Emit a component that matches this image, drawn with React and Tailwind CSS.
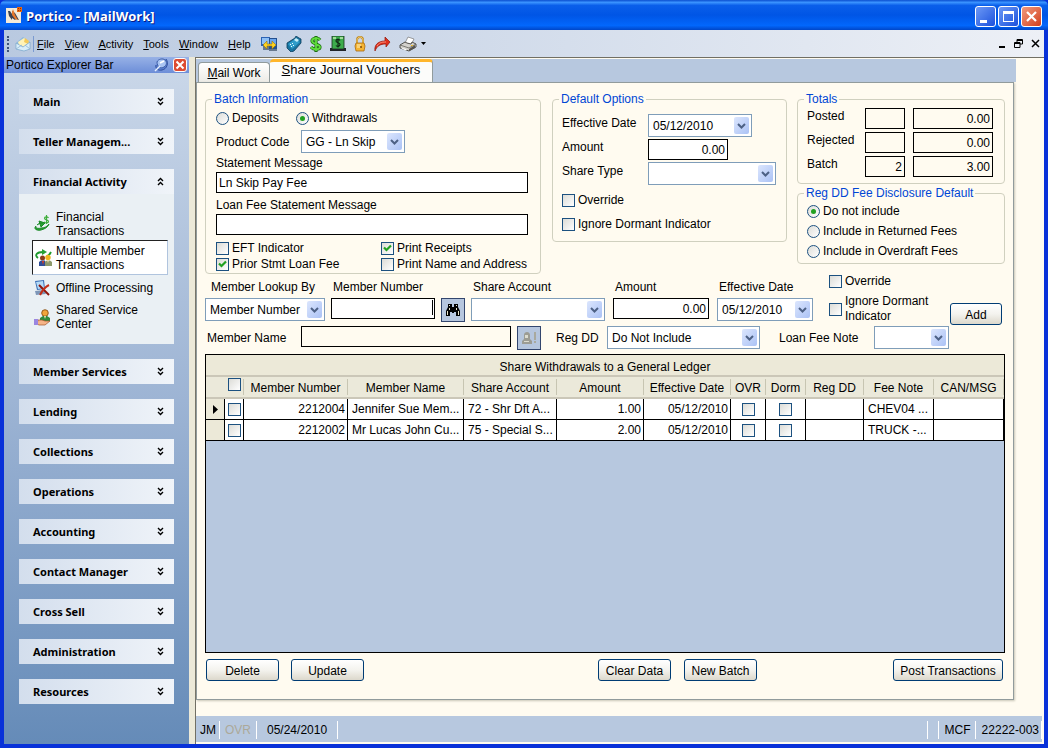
import React, { useState } from 'react';
import clsx from 'clsx';

const MENUS = ['File', 'View', 'Activity', 'Tools', 'Window', 'Help'];

const SECTIONS_TOP = ['Main', 'Teller Managem...'];
const SECTIONS_BOTTOM = [
  'Member Services',
  'Lending',
  'Collections',
  'Operations',
  'Accounting',
  'Contact Manager',
  'Cross Sell',
  'Administration',
  'Resources',
];

const ROWS = [
  { number: '2212004', name: 'Jennifer Sue Mem...', share: '72 - Shr Dft A...', amount: '1.00', date: '05/12/2010', note: 'CHEV04 ...' },
  { number: '2212002', name: 'Mr Lucas John Cu...', share: '75 - Special S...', amount: '2.00', date: '05/12/2010', note: 'TRUCK -...' },
];

/* ---------- icons ---------- */

const AppIcon = () => (
  <svg viewBox="0 0 16 16" className="w-4 h-4 shrink-0">
    <rect y="1" width="15" height="15" fill="#f4ead8" />
    <path d="M2 4h2l2 3V4l3 2 4 7-3-1-1 1-3-2v2L3 9z" fill="#3b4252" />
    <path d="M6 5l1-3 2 6 3 5-3-1-3-4z" fill="#e8782a" />
    <rect x="11" width="5" height="5" fill="#e86a10" />
    <path d="M12 1h1v1h-1zM14 1h1v1h-1zM12 3h1v1h-1zM14 3h1v1h-1z" fill="#a02c00" />
  </svg>
);

const EnvelopeIcon = () => (
  <svg viewBox="0 0 16 16" className="w-4 h-4">
    <path d="M1 7l7-6 7 5v7l-6 2-8-2z" fill="#8db9dc" />
    <path d="M3 6l6-4 5 4-5 5-5-2z" fill="#fff3b8" />
    <path d="M10 2l4 3-1 3-4-2z" fill="#f3c95a" />
    <path d="M1 7l7 4 7-5v7l-6 2-8-2z" fill="#d9eefa" stroke="#6f9dc4" strokeWidth=".6" />
    <path d="M1 13l6-4M15 13l-5-4" stroke="#8fb4d2" strokeWidth=".8" />
  </svg>
);

const ComputersIcon = () => (
  <svg viewBox="0 0 17 16" className="w-[17px] h-4">
    <path d="M0 1h9v9H0z" fill="#2c63b4" />
    <path d="M1 2h7v6H1z" fill="#8fc0f5" />
    <path d="M8 2h8v11H8z" fill="#24508f" />
    <path d="M9 3h6v7H9z" fill="#6aa5ec" />
    <path d="M2 10h6v4H2zM8 13h8v2H8z" fill="#66788f" />
    <path d="M2 9l4-4v3h5V5l4 4-4 4v-3H6v3z" fill="#ffd21f" stroke="#98730a" strokeWidth=".6" />
  </svg>
);

const PhoneIcon = () => (
  <svg viewBox="0 0 16 16" className="w-4 h-4">
    <path d="M1 7l8-5 1-2 3 2 2 1v4l-7 8-3 1-4-4z" fill="#17739f" stroke="#0d3c5c" strokeWidth=".8" />
    <path d="M2 8l7-5 5 3-8 7z" fill="#2f9cc9" />
    <path d="M8 4l2-2 3 2-2 2z" fill="#c5eefa" />
    <path d="M4 8l1 1M6 7l1 1M5 10l1 1M7 9l1 1" stroke="#eafaff" />
  </svg>
);

const DollarIcon = () => (
  <svg viewBox="0 0 12 16" className="w-3 h-4">
    <path d="M10 4C8 1 2 2 2 5s8 3 8 6-7 3-9 0M6 0v16" fill="none" stroke="#1d6d10" strokeWidth="3.200" />
    <path d="M10 4C8 1 2 2 2 5s8 3 8 6-7 3-9 0M6 1v14" fill="none" stroke="#5fdc3c" strokeWidth="1.800" />
  </svg>
);

const CashDrawerIcon = () => (
  <svg viewBox="0 0 16 16" className="w-4 h-4">
    <path d="M2 0h12v13H2z" fill="#3dac4c" stroke="#17301c" strokeWidth=".8" />
    <path d="M3 1h3v2H3zM10 1h3v2h-3z" fill="#a0dd98" />
    <path d="M10 4.500C9 3 6 3 6 5s4 1.500 4 3.500S7 11 6 9.500M8 2.500v9" fill="none" stroke="#0f2914" strokeWidth="1.200" />
    <path d="M0 12h2v1h12v-1h2v3H0z" fill="#20242a" />
  </svg>
);

const LockIcon = () => (
  <svg viewBox="0 0 12 16" className="w-3 h-4">
    <path d="M3 8V4c0-4 6-4 6 0v4" fill="none" stroke="#b98018" strokeWidth="2" />
    <path d="M3 8V4c0-4 6-4 6 0v4" fill="none" stroke="#ffe28a" strokeWidth=".8" />
    <path d="M2 7h8l1 3-1 5H2l-1-5z" fill="#f5b432" stroke="#a86a10" strokeWidth=".8" />
    <path d="M3 9h4M3 11h4" stroke="#fff0b8" />
    <circle cx="7" cy="11" r="1" fill="#7c4a08" />
  </svg>
);

const RedoIcon = () => (
  <svg viewBox="0 0 17 16" className="w-[17px] h-4">
    <path d="M1 15c-1-6 3-10 10-10V1l5 5-4 5V8c-6 0-9 2-11 7z" fill="#e0301c" stroke="#8e1409" strokeWidth=".7" />
    <path d="M3 10c2-3 4-4 9-4" fill="none" stroke="#ff8f78" />
  </svg>
);

const PrinterIcon = () => (
  <svg viewBox="0 0 18 16" className="w-[18px] h-4">
    <path d="M6 7l3-6 6 2-3 6z" fill="#fff" stroke="#777" strokeWidth=".7" />
    <path d="M1 9l5-3 2 1 4 1 1-2 4 2v3l-7 4-9-3z" fill="#d3d1cc" stroke="#44433f" strokeWidth=".9" />
    <path d="M1 9l9 3 7-4" fill="none" stroke="#66645e" strokeWidth=".8" />
    <path d="M4 12l4 1.500-1 1-5-2z" fill="#fff" />
    <path d="M10 13l6-4v3l-6 3z" fill="#56544f" />
    <path d="M12 9h2v1h-2z" fill="#e6b82a" />
  </svg>
);

const MoneyFlowIcon = () => (
  <svg viewBox="0 0 16 18" className="w-4 h-[18px] shrink-0">
    <path d="M14.500 3c-1-1.500-4-1.500-4 .3s4 1.400 4 3.200-3.500 2-4.500.3M12.500 0v9" fill="none" stroke="#3fae3c" strokeWidth="1.200" />
    <path d="M2 11c-3 3 1 5 5 4s7-3 8-6c-2 3-5 4-8 4-3 1-6 0-5-2z" fill="#27a034" stroke="#1c8a28" />
    <path d="M3 10c2-2 4-2 6-2M5 6l6 2-4 4-1-3z" fill="#27a034" stroke="#1c8a28" />
  </svg>
);

const MembersFlowIcon = () => (
  <svg viewBox="0 0 17 18" className="w-[17px] h-[18px] shrink-0">
    <path d="M3 9c-4-3-1-6 5-6M11 8c3-1 4-3 5-5" fill="none" stroke="#1f9a2e" strokeWidth="1.800" />
    <path d="M7 0l5 3-5 3z" fill="#27a034" />
    <circle cx="7.500" cy="9" r="2.500" fill="#8a3d1a" />
    <circle cx="13" cy="8.500" r="2.700" fill="#f0b51e" />
    <path d="M4 17v-4l2-1.500h4V17z" fill="#2e4d98" />
    <path d="M7 12l1 4 1-4z" fill="#e43c1c" />
    <path d="M10 17v-4.500l2-1h3l2 1.500V17z" fill="#8e9a6c" />
    <path d="M12 11h2l-1 3z" fill="#f7dfa8" />
  </svg>
);

const OfflineIcon = () => (
  <svg viewBox="0 0 16 16" className="w-4 h-4 shrink-0">
    <path d="M1 1l9-1 1 9-8 1z" fill="#3b6fb5" />
    <path d="M2 2l7-1 1 7-6 1z" fill="#b5dbf8" />
    <path d="M1 11l9-1 2 4-10 1z" fill="#7d96b8" />
    <path d="M5 5l10 10" stroke="#8e1409" strokeWidth="2" />
    <path d="M15 5c-4 2-7 6-9 10" fill="none" stroke="#c2301a" strokeWidth="2" />
  </svg>
);

const SharedIcon = () => (
  <svg viewBox="0 0 16 17" className="w-4 h-[17px] shrink-0">
    <circle cx="11" cy="4" r="3.300" fill="#f0a53a" stroke="#7d4208" strokeWidth=".8" />
    <path d="M6 12V9l3-2h4l3 2v3z" fill="#2f8a3c" />
    <path d="M10 7h2l-1 3z" fill="#f8e3b8" />
    <path d="M4 11h4l3 1h5l-5 4H5l-2-1z" fill="#f5b488" stroke="#a2542a" strokeWidth=".7" />
    <path d="M0 10h4v6H0z" fill="#9a86e0" />
  </svg>
);

const BinocularsIcon = () => (
  <svg viewBox="0 0 16 14" className="w-4 h-3.5">
    <path d="M3 1h4v3h2V1h4v3l2 4v5h-4V9H9v1H7V9H5v4H1V8l2-4z" fill="#000" />
    <path d="M4.500 2v1M11.500 2v1M4.500 5v2M11.500 5v2M2.500 8v4M13.500 8v4" stroke="#e8e2c8" />
  </svg>
);

const PersonAlertIcon = () => (
  <svg viewBox="0 0 16 14" className="w-4 h-3.5">
    <path d="M3 4c0-4 6-4 6 0v4l2 2v3H1v-3l2-2z" fill="#9c9c94" />
    <path d="M4 4h3v3H4zM3 10h5v1H3z" fill="#dcdcd0" />
    <path d="M13 1h2v8h-2zM13 10h2v2h-2z" fill="#a9a99e" />
  </svg>
);

const Chevrons = ({ up }) => (
  <svg viewBox="0 0 7 9" className="w-[7px] h-[9px]" fill="none" stroke="#000" strokeWidth="1.400">
    {up ? <path d="M1 4l2.500-2.500L6 4M1 8l2.500-2.500L6 8" /> : <path d="M1 1l2.500 2.500L6 1M1 5l2.500 2.500L6 5" />}
  </svg>
);

/* ---------- form controls ---------- */

const Check = ({ label, checked = false, className, ...rest }) => {
  const [on, setOn] = useState(checked);
  return (
    <label className={clsx('flex items-center gap-[3px]', className)}>
      <span className="grid place-items-center shrink-0">
        <input
          type="checkbox"
          checked={on}
          onChange={(e) => setOn(e.target.checked)}
          className="[grid-area:1/1] appearance-none w-[13px] h-[13px] border border-[#1c5180] bg-gradient-to-br from-[#dcdcd7] to-white"
          {...rest}
        />
        {on && (
          <svg viewBox="0 0 9 9" className="[grid-area:1/1] w-[9px] h-[9px] pointer-events-none">
            <path d="M1 3.500L3.500 6 8 1.500" fill="none" stroke="#21a121" strokeWidth="2.200" />
          </svg>
        )}
      </span>
      {label && <span>{label}</span>}
    </label>
  );
};

const Radio = ({ label, className, ...rest }) => (
  <label className={clsx('flex items-center gap-[3px]', className)}>
    <span className="grid place-items-center">
      <input
        type="radio"
        className="peer [grid-area:1/1] appearance-none w-[13px] h-[13px] rounded-full border border-[#1c5180] bg-gradient-to-br from-[#dcdcd7] to-white"
        {...rest}
      />
      <span className="[grid-area:1/1] hidden peer-checked:block w-[5px] h-[5px] rounded-full bg-[#21a121] pointer-events-none" />
    </span>
    <span>{label}</span>
  </label>
);

const Select = ({ value, className, ...rest }) => (
  <span className={clsx('grid items-center h-[23px] shrink-0', className)}>
    <select className="[grid-area:1/1] appearance-none w-full h-full pl-1 bg-white border border-[#7f9db9] rounded-none" {...rest}>
      <option>{value}</option>
    </select>
    <span className="[grid-area:1/1] justify-self-end mr-[3px] w-[15px] h-[17px] flex items-center justify-center rounded-xs bg-gradient-to-br from-[#dce6fd] to-[#abc2f5] pointer-events-none">
      <svg viewBox="0 0 9 6" className="w-[9px] h-1.5">
        <path d="M1 1l3.500 3.500L8 1" fill="none" stroke="#4d6185" strokeWidth="2" />
      </svg>
    </span>
  </span>
);

const Field = ({ className, ...rest }) => (
  <input type="text" className={clsx('h-[21px] px-0.5 border border-black shrink-0', className)} {...rest} />
);

const Button = ({ className, children }) => (
  <button
    type="button"
    className={clsx(
      'h-[22px] pt-0.5 rounded-[3px] border border-[#003c74] bg-gradient-to-b from-white via-[#f4f3ee] to-[#dcd8cc] text-center',
      className
    )}
  >
    {children}
  </button>
);

const Group = ({ title, className, children }) => (
  <fieldset className={clsx('border border-[#d0d0bf] rounded', className)}>
    <legend className="ml-1.5 px-0.5 h-3.5 text-[#0046d5]">{title}</legend>
    <div className="pl-[9px]">{children}</div>
  </fieldset>
);

/* ---------- chrome ---------- */

const TitleBar = () => (
  <header className="h-[30px] shrink-0 flex items-center pl-1.5 pr-1.5 gap-1 rounded-t-md bg-[linear-gradient(#0b4fd0,#3a93ff_8%,#0a5fea_18%,#0055e5_50%,#0267fc_85%,#0046c8)]">
    <AppIcon />
    <h1 className="flex-1 pt-0.5 font-['Open_Sans'] font-bold text-[13px] text-white [text-shadow:1px_1px_#0a1883]">Portico - [MailWork]</h1>
    <div className="flex gap-0.5 pt-0.5">
      <button type="button" aria-label="Minimize" className="w-[21px] h-[21px] rounded-[3px] border border-white bg-gradient-to-br from-[#6d98f5] to-[#1c4fdc]">
        <svg viewBox="0 0 19 19"><path d="M4 13h7v3H4z" fill="#fff" /></svg>
      </button>
      <button type="button" aria-label="Maximize" className="w-[21px] h-[21px] rounded-[3px] border border-white bg-gradient-to-br from-[#6d98f5] to-[#1c4fdc]">
        <svg viewBox="0 0 19 19"><path d="M4 4h11v11H4zM5 7h9v7H5z" fill="#fff" fillRule="evenodd" /></svg>
      </button>
      <button type="button" aria-label="Close" className="w-[21px] h-[21px] rounded-[3px] border border-white bg-gradient-to-br from-[#f0987c] to-[#d23c14]">
        <svg viewBox="0 0 19 19"><path d="M5 5l9 9M14 5l-9 9" stroke="#fff" strokeWidth="2.200" /></svg>
      </button>
    </div>
  </header>
);

const MenuBar = () => (
  <div className="h-[27px] shrink-0 flex items-center pl-0.5 pr-1 bg-gradient-to-r from-[#b9c9e0] to-[#edf0f6] text-[11px]">
    <span className="w-0.5 h-4 ml-px mr-1.5 border-l-2 border-dotted border-[#3d5178]" />
    <EnvelopeIcon />
    <span className="w-px h-4 ml-0.5 mr-[3px] bg-[#7a9ad0]" />
    <nav className="flex gap-2.5">
      {MENUS.map((m) => (
        <a key={m} href="#">
          <u>{m[0]}</u>
          {m.slice(1)}
        </a>
      ))}
    </nav>
    <div className="flex items-center gap-2 ml-2.5">
      <ComputersIcon />
      <PhoneIcon />
      <DollarIcon />
      <CashDrawerIcon />
      <LockIcon />
      <RedoIcon />
      <PrinterIcon />
    </div>
    <svg viewBox="0 0 5 3" className="w-[5px] h-[3px] ml-1"><path d="M0 0h5L2.500 3z" /></svg>
    <div className="ml-auto flex items-center gap-2">
      <button type="button" aria-label="Minimize document">
        <svg viewBox="0 0 8 9" className="w-2 h-[9px]"><path d="M1 7h6v2H1z" /></svg>
      </button>
      <button type="button" aria-label="Restore document">
        <svg viewBox="0 0 9 9" className="w-[9px] h-[9px]" fill="none" stroke="#000"><path d="M3 3V.5h5.500V5H6M3 1.500h5.500M.5 3.500H6v5H.5zM.5 4.500H6" /></svg>
      </button>
      <button type="button" aria-label="Close document">
        <svg viewBox="0 0 9 9" className="w-[9px] h-[9px]"><path d="M1 1l7 7M8 1L1 8" stroke="#000" strokeWidth="1.500" /></svg>
      </button>
    </div>
  </div>
);

const SectionBar = ({ title, open }) => (
  <button
    type="button"
    className="w-full h-[25px] pl-3.5 pr-2.5 flex items-center justify-between bg-gradient-to-r from-[#d3deed] to-[#f0f4f9] font-['Noto_Sans'] font-bold text-[11px]"
  >
    {title}
    <Chevrons up={open} />
  </button>
);

const Sidebar = () => (
  <aside className="w-[185px] shrink-0 flex flex-col bg-gradient-to-b from-[#cbd8e9] via-[#9db4d4] to-[#658bb8]">
    <div className="h-4 pl-0.5 pr-0.5 flex items-center gap-1 bg-gradient-to-b from-[#97b1e6] to-[#6d8ed8]">
      <h2 className="flex-1">Portico Explorer Bar</h2>
      <svg viewBox="0 0 15 14" className="w-[15px] h-3.5">
        <path d="M12 1c3 4 1 10-4 11-4 1-7-2-6-5" fill="#5b7fd0" stroke="#2f4f9c" />
        <path d="M3 4c1-3 6-4 8-2s2 5-1 7-7 0-7-5z" fill="#a9c4f2" stroke="#3c5da8" />
        <path d="M1 13l5-5" stroke="#e8f0ff" strokeWidth="1.500" />
        <path d="M6 5l4-2" stroke="#fff" strokeWidth="1.800" />
      </svg>
      <button type="button" aria-label="Close bar" className="w-3.5 h-3.5 rounded-[3px] border border-white bg-[#dd4b32]">
        <svg viewBox="0 0 12 12"><path d="M2.500 2.500l7 7M9.500 2.500l-7 7" stroke="#fff" strokeWidth="2" /></svg>
      </button>
    </div>
    <div className="pt-4 px-[15px] pb-[15px] flex flex-col gap-[15px]">
      {SECTIONS_TOP.map((s) => (
        <SectionBar key={s} title={s} />
      ))}
      <div>
        <SectionBar title="Financial Activity" open />
        <ul className="h-[150px] pt-3.5 pr-1.5 pl-[13px] bg-[#eaf0f4] leading-3.5">
          <li className="flex items-center gap-1.5 h-8 pl-0.5">
            <MoneyFlowIcon />
            <a href="#">Financial<br />Transactions</a>
          </li>
          <li className="flex items-center gap-1 h-[35px] pl-0.5 bg-white border border-t-[#222] border-l-[#222] border-r-[#b0c4de] border-b-[#b0c4de]">
            <MembersFlowIcon />
            <a href="#">Multiple Member<br />Transactions</a>
          </li>
          <li className="flex items-center gap-1.5 h-[26px] pl-0.5 whitespace-nowrap">
            <OfflineIcon />
            <a href="#">Offline Processing</a>
          </li>
          <li className="flex items-center gap-1.5 h-8 pl-0.5">
            <SharedIcon />
            <a href="#">Shared Service<br />Center</a>
          </li>
        </ul>
      </div>
      {SECTIONS_BOTTOM.map((s) => (
        <SectionBar key={s} title={s} />
      ))}
    </div>
  </aside>
);

/* ---------- voucher form ---------- */

const BatchInformation = () => (
  <Group title="Batch Information" className="w-[336px] h-[182px]">
    <div className="flex pl-px mt-1 h-4">
      <Radio name="batch" label="Deposits" className="w-20" />
      <Radio name="batch" label="Withdrawals" defaultChecked />
    </div>
    <div className="pl-px">
      <div className="flex items-center mt-1">
        <label htmlFor="product" className="w-[85px]">Product Code</label>
        <Select id="product" value="GG - Ln Skip" className="w-[104px]" />
      </div>
      <label htmlFor="stmt" className="block h-[19px] leading-5">Statement Message</label>
      <Field id="stmt" defaultValue="Ln Skip Pay Fee" className="block w-[312px] bg-white" />
      <label htmlFor="loanmsg" className="block h-[21px] leading-6">Loan Fee Statement Message</label>
      <Field id="loanmsg" className="block w-[312px] bg-white" />
      <div className="grid grid-cols-[165px_auto] auto-rows-[16px] items-center mt-[5px]">
        <Check label="EFT Indicator" />
        <Check label="Print Receipts" checked />
        <Check label="Prior Stmt Loan Fee" checked />
        <Check label="Print Name and Address" />
      </div>
    </div>
  </Group>
);

const DefaultOptions = () => (
  <Group title="Default Options" className="w-[235px] h-[150px]">
    <div className="grid grid-cols-[86px_auto] auto-rows-[24px] mt-2 leading-[18px]">
      <label htmlFor="defdate">Effective Date</label>
      <Select id="defdate" value="05/12/2010" className="w-[104px]" />
      <label htmlFor="defamt">Amount</label>
      <Field id="defamt" defaultValue="0.00" className="w-20 mt-px bg-white text-right" />
      <label htmlFor="sharetype">Share Type</label>
      <Select id="sharetype" value="" className="w-[128px]" />
    </div>
    <Check label="Override" className="h-6 mt-0.5" />
    <Check label="Ignore Dormant Indicator" className="h-6" />
  </Group>
);

const Totals = () => (
  <Group title="Totals" className="h-[92px]">
    <div className="grid grid-cols-[58px_48px_80px] auto-rows-[24px] mt-0.5 leading-4">
      {[['Posted', '', '0.00'], ['Rejected', '', '0.00'], ['Batch', '2', '3.00']].map(([name, count, total]) => (
        <React.Fragment key={name}>
          <span>{name}</span>
          <Field readOnly aria-label={`${name} count`} value={count} className="w-10 text-right" />
          <Field readOnly aria-label={`${name} total`} value={total} className="w-20 text-right" />
        </React.Fragment>
      ))}
    </div>
  </Group>
);

const RegDDDefault = () => (
  <Group title="Reg DD Fee Disclosure Default" className="h-[78px] mt-0.5">
    <div className="pt-px">
      <Radio name="regdd" label="Do not include" className="h-5" defaultChecked />
      <Radio name="regdd" label="Include in Returned Fees" className="h-5" />
      <Radio name="regdd" label="Include in Overdraft Fees" className="h-5" />
    </div>
  </Group>
);

const IconButton = ({ label, children }) => (
  <button type="button" aria-label={label} className="w-6 h-6 shrink-0 flex items-center justify-center bg-[#b6c6de] border border-[#33466e]">
    {children}
  </button>
);

const Lookup = () => (
  <div className="flex items-start h-12">
    <div className="flex items-start">
      <div>
        <label htmlFor="lookup" className="block h-6 pl-1.5 leading-[26px]">Member Lookup By</label>
        <Select id="lookup" value="Member Number" className="w-[120px]" />
      </div>
      <div className="ml-1.5">
        <label htmlFor="memnum" className="block h-6 pl-0.5 leading-[26px]">Member Number</label>
        <div className="relative">
          <Field id="memnum" className="block w-[104px] bg-white text-right" />
          <span className="absolute right-0.5 top-0.5 w-px h-[15px] bg-black" />
        </div>
      </div>
      <div className="ml-1.5 pt-6">
        <IconButton label="Find member"><BinocularsIcon /></IconButton>
      </div>
      <div className="ml-1.5">
        <label htmlFor="shareacct" className="block h-6 pl-0.5 leading-[26px]">Share Account</label>
        <Select id="shareacct" value="" className="w-[134px]" />
      </div>
      <div className="ml-2">
        <label htmlFor="amt" className="block h-6 pl-0.5 leading-[26px]">Amount</label>
        <Field id="amt" defaultValue="0.00" className="block w-24 bg-white text-right" />
      </div>
      <div className="ml-2">
        <label htmlFor="effdate" className="block h-6 pl-0.5 leading-[26px]">Effective Date</label>
        <Select id="effdate" value="05/12/2010" className="w-24" />
      </div>
    </div>
    <div className="ml-4 leading-[15px]">
      <Check label="Override" className="h-3.5" />
      <Check label={<>Ignore Dormant<br />Indicator</>} className="mt-1.5" />
    </div>
    <Button className="w-[52px] ml-auto mr-[3px] mt-[29px]">Add</Button>
  </div>
);

const LookupSecond = () => (
  <div className="flex items-center mt-1 h-[23px]">
    <label htmlFor="memname" className="w-24 pl-0.5">Member Name</label>
    <Field id="memname" className="w-[210px] mb-0.5" />
    <span className="ml-1.5"><IconButton label="Member alert"><PersonAlertIcon /></IconButton></span>
    <label htmlFor="regddsel" className="ml-[15px] w-[51px]">Reg DD</label>
    <Select id="regddsel" value="Do Not Include" className="w-[153px]" />
    <label htmlFor="feenote" className="ml-[19px] w-[95px]">Loan Fee Note</label>
    <Select id="feenote" value="" className="w-[75px]" />
  </div>
);

const Th = ({ children, className }) => (
  <th className={clsx('h-[22px] p-0 font-normal border-b-2 border-b-[#cbc7b8]', className)}>
    <span className="flex items-end justify-center h-4 border-r border-[#c7c5b2]">{children}</span>
  </th>
);

const Ledger = () => (
  <div className="flex-1 mt-[5px] border border-black bg-[#b7c8df]">
    <table className="w-full table-fixed border-separate border-spacing-0 whitespace-nowrap">
      <caption className="h-[22px] leading-6 bg-[#ece9d8] border-b-2 border-[#cbc7b8]">Share Withdrawals to a General Ledger</caption>
      <colgroup>
        <col className="w-[19px]" />
        <col className="w-[19px]" />
        <col className="w-[104px]" />
        <col className="w-[116px]" />
        <col className="w-[93px]" />
        <col className="w-[87px]" />
        <col className="w-[87px]" />
        <col className="w-[35px]" />
        <col className="w-[40px]" />
        <col className="w-[58px]" />
        <col className="w-[70px]" />
        <col />
      </colgroup>
      <thead className="bg-[#ebe9da]">
        <tr>
          <th className="p-0 border-b-2 border-b-[#cbc7b8]" />
          <Th><Check aria-label="Select all" className="mb-1" /></Th>
          <Th>Member Number</Th>
          <Th>Member Name</Th>
          <Th>Share Account</Th>
          <Th>Amount</Th>
          <Th>Effective Date</Th>
          <Th>OVR</Th>
          <Th>Dorm</Th>
          <Th>Reg DD</Th>
          <Th>Fee Note</Th>
          <Th>CAN/MSG</Th>
        </tr>
      </thead>
      <tbody className="bg-white [&_td]:h-[21px] [&_td]:p-0 [&_td]:border-r [&_td]:border-b [&_td]:border-black [&_td]:overflow-hidden">
        {ROWS.map((row, i) => (
          <tr key={row.number}>
            <td className="bg-[#ece9d8]">
              {i === 0 && <svg viewBox="0 0 5 9" className="w-[5px] h-[9px] mx-auto"><path d="M0 0l5 4.500L0 9z" /></svg>}
            </td>
            <td><Check aria-label="Select row" className="justify-center" /></td>
            <td className="text-right"><span className="pr-0.5">{row.number}</span></td>
            <td><span className="pl-1">{row.name}</span></td>
            <td><span className="pl-1">{row.share}</span></td>
            <td className="text-right"><span className="pr-0.5">{row.amount}</span></td>
            <td className="text-right"><span className="pr-0.5">{row.date}</span></td>
            <td><Check aria-label="Override" className="justify-center" /></td>
            <td><Check aria-label="Dormant" className="justify-center" /></td>
            <td />
            <td><span className="pl-1">{row.note}</span></td>
            <td />
          </tr>
        ))}
      </tbody>
    </table>
  </div>
);

const VoucherPanel = () => (
  <section className="flex-1 flex flex-col px-2 pt-[9px] pb-[18px] mr-[30px] mb-4 border border-[#919b9c] shadow-[1px_1px_2px_#c9c6b8] bg-[#fffbf0]">
    <div className="flex items-start">
      <BatchInformation />
      <div className="ml-[11px]"><DefaultOptions /></div>
      <div className="ml-2.5 flex-1">
        <Totals />
        <RegDDDefault />
      </div>
    </div>
    <Lookup />
    <LookupSecond />
    <Ledger />
    <div className="flex mt-1.5 pl-px pr-0.5">
      <Button className="w-[73px]">Delete</Button>
      <Button className="w-[73px] ml-3">Update</Button>
      <Button className="w-[73px] ml-auto">Clear Data</Button>
      <Button className="w-[73px] ml-[13px]">New Batch</Button>
      <Button className="w-[110px] ml-[136px]">Post Transactions</Button>
    </div>
  </section>
);

const Tabs = () => (
  <div role="tablist" className="h-[23px] shrink-0 flex items-end mr-7 pl-0.5 bg-[#b7c8df]">
    <button type="button" role="tab" aria-selected="false" className="w-[72px] h-5 rounded-t border border-b-0 border-[#919b9c] bg-gradient-to-b from-white to-[#ecebe6]">
      <u>M</u>ail Work
    </button>
    <button type="button" role="tab" aria-selected="true" className="w-[163px] h-[23px] pb-1 border-t-[3px] border-t-[#ffb62c] border-r border-r-[#919b9c] rounded-t-sm bg-[#fcfcfa] text-[13px] leading-4">
      <u>S</u>hare Journal Vouchers
    </button>
  </div>
);

const StatusBar = () => (
  <footer className="h-[26px] shrink-0 flex items-center mb-0.5 mr-0.5 pl-1 pt-0.5 bg-[#b7c8df]">
    <span className="pr-[3px] border-r border-white leading-[18px]">JM</span>
    <span className="px-[5px] border-r border-white leading-[18px] text-[#aca899]">OVR</span>
    <span className="px-2.5 border-r border-white leading-[18px]">05/24/2010</span>
    <span className="ml-auto w-3 h-[18px] border-x border-white" />
    <span className="pl-1.5 pr-1 border-r border-white leading-[18px]">MCF</span>
    <span className="pl-1.5 pr-0.5 border-r border-white leading-[18px]">22222-003</span>
  </footer>
);

const App = () => (
  <div className="min-h-screen flex flex-col bg-[#0831d9] font-['Liberation_Sans',sans-serif] text-xs leading-3.5 text-black">
    <TitleBar />
    <div className="flex-1 flex flex-col mx-1 mb-1">
      <MenuBar />
      <div className="flex-1 flex">
        <Sidebar />
        <main className="flex-1 min-w-0 flex flex-col border-l-[6px] border-[#ece9d8] bg-[#fffbf0]">
          <div className="flex-1 flex flex-col pt-px border-l border-t border-[#716f64]">
            <Tabs />
            <VoucherPanel />
            <StatusBar />
          </div>
        </main>
      </div>
    </div>
  </div>
);

export default App;
